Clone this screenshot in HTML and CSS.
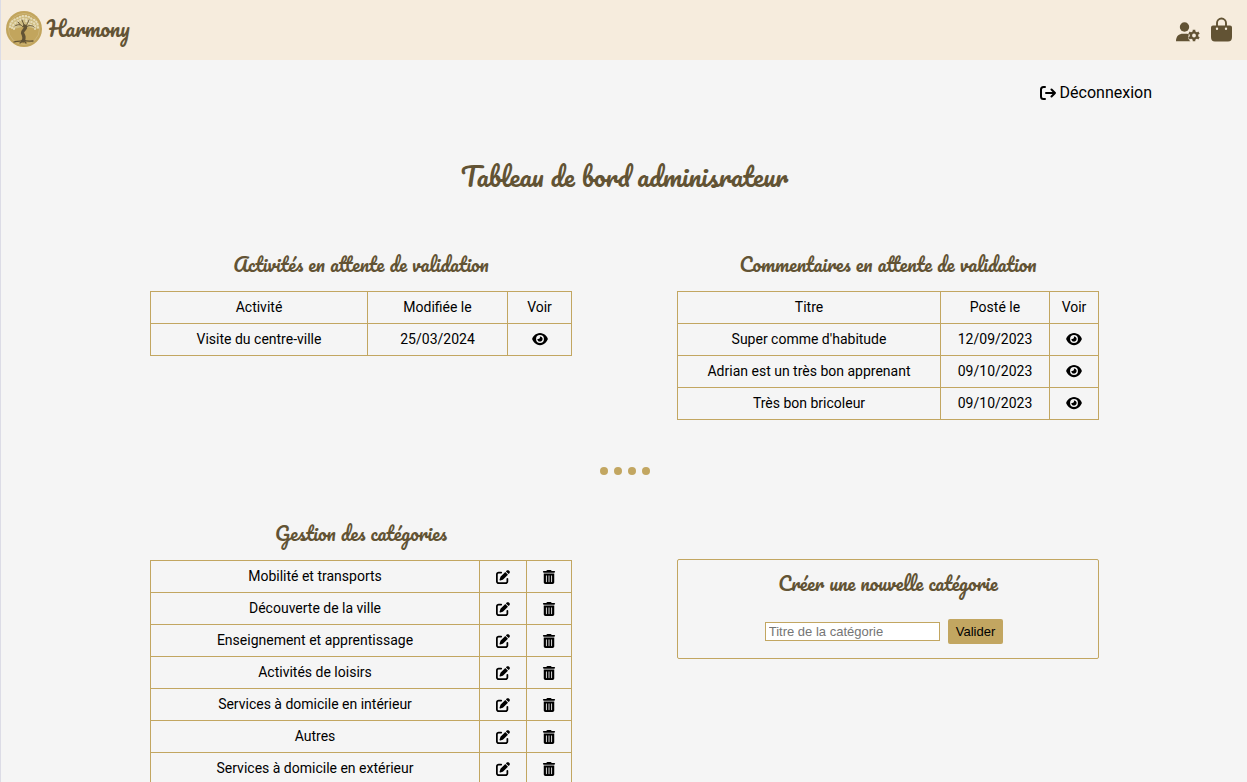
FILE: index.html
```html
<!DOCTYPE html>
<html lang="fr">
<head>
<meta charset="utf-8">
<meta name="viewport" content="width=device-width, initial-scale=1">
<title>Harmony</title>
<link rel="stylesheet" href="styles.css">
</head>
<body>
<svg class="sprite" aria-hidden="true">
  <symbol id="eye" viewBox="0 0 576 512"><path d="M288 32c-80.8 0-145.5 36.8-192.6 80.6C48.6 156 17.3 208 2.5 243.7c-3.3 7.9-3.3 16.7 0 24.6C17.3 304 48.6 356 95.4 399.4C142.5 443.2 207.2 480 288 480s145.5-36.8 192.6-80.6c46.8-43.5 78.1-95.4 93-131.1c3.3-7.9 3.3-16.7 0-24.6c-14.9-35.7-46.2-87.7-93-131.1C433.5 68.8 368.8 32 288 32zM144 256a144 144 0 1 1 288 0 144 144 0 1 1 -288 0zm144-64c0 35.3-28.7 64-64 64c-7.1 0-13.9-1.2-20.3-3.3c-5.5-1.8-11.9 1.6-11.7 7.4c.3 6.9 1.3 13.8 3.2 20.7c13.7 51.2 66.4 81.6 117.6 67.9s81.6-66.4 67.9-117.6c-11.1-41.5-47.8-69.4-88.6-71.1c-5.8-.2-9.2 6.1-7.4 11.7c2.1 6.4 3.3 13.2 3.3 20.3z"/></symbol>
  <symbol id="edit" viewBox="0 0 512 512"><path d="M471.6 21.7c-21.9-21.9-57.3-21.9-79.2 0L362.3 51.7l97.9 97.9 30.1-30.1c21.9-21.9 21.9-57.3 0-79.2L471.6 21.7zm-299.2 220c-6.1 6.1-10.8 13.6-13.5 21.9l-29.6 88.8c-2.9 8.6-.6 18.1 5.8 24.6s15.9 8.7 24.6 5.8l88.8-29.6c8.2-2.7 15.7-7.4 21.9-13.5L437.7 172.3 339.7 74.3 172.4 241.7zM96 64C43 64 0 107 0 160V416c0 53 43 96 96 96H352c53 0 96-43 96-96V320c0-17.7-14.3-32-32-32s-32 14.3-32 32v96c0 17.7-14.3 32-32 32H96c-17.7 0-32-14.3-32-32V160c0-17.7 14.3-32 32-32h96c17.7 0 32-14.3 32-32s-14.3-32-32-32H96z"/></symbol>
  <symbol id="trash" viewBox="0 0 448 512"><path fill-rule="evenodd" d="M135.2 17.7L128 32H32C14.3 32 0 46.3 0 64S14.3 96 32 96H416c17.7 0 32-14.3 32-32s-14.3-32-32-32H320l-7.2-14.3C307.4 6.8 296.3 0 284.2 0H163.8c-12.1 0-23.2 6.8-28.6 17.7zM416 128H32V448c0 35.3 28.7 64 64 64H352c35.3 0 64-28.7 64-64V128zM112 208a16 16 0 0 1 32 0V432a16 16 0 0 1-32 0zM208 208a16 16 0 0 1 32 0V432a16 16 0 0 1-32 0zM304 208a16 16 0 0 1 32 0V432a16 16 0 0 1-32 0z"/></symbol>
</svg>

<header class="topbar">
  <a class="brand" href="#">
    <svg class="brand-logo" viewBox="0 0 36 36" aria-hidden="true">
      <circle cx="18" cy="18" r="18" fill="#c2a55d"/>
      <circle cx="18" cy="18" r="15.5" fill="none" stroke="#cdb577" stroke-width="1"/>
      <path fill="#cfbd83" d="M3 16C3 11 6 8 10 8C13 4 22 3 26 8C30 8 33 12 33 17C29 19 25 16 20 16C15 15 10 20 3 16Z"/>
      <g fill="none" stroke="#e6dcb8" stroke-width="2" stroke-linecap="round" stroke-dasharray=".5 2.500">
        <path d="M4 16C4 11 8 8 12 7C16 4 22 4 26 8C30 9 32 12 32 17"/>
        <path d="M6 17C7 12 11 11 14 9C18 6 22 9 25 11C28 11 30 14 29 18"/>
        <path d="M8 18C9 14 12 13 14 13M20 10L25 14C27 14 28 16 27 18"/>
      </g>
      <g fill="none" stroke="#625334" stroke-linecap="round">
        <path stroke-width="1" d="M17 16C15 13 12 13 9 15M14 13.500L12 11M18 14L16 9M20 15C21 13 22 12 23 9M20 16C23 14 26 14 28 16"/>
        <path stroke-width="3.200" d="M18.500 15C22 17 16 19 16.500 22C18 25 19 27 17 30"/>
        <path stroke-width="1.300" d="M17 29C14 31 11 30 8 31M18 29C21 31 24 30 27 30M17 30L14 32M18 30L20 32"/>
      </g>
    </svg>
    <span>Harmony</span>
  </a>
  <nav class="top-actions" aria-label="Compte">
    <a href="#" aria-label="Administration">
      <svg class="icon-user" viewBox="0 0 24 20" aria-hidden="true">
        <circle cx="8.500" cy="5" r="4.700"/>
        <path d="M0 19.200C0 14 3 11.700 7 11.700H10C11.500 11.700 12.500 12 13 12.500C11.500 15 12.500 18 14.500 19.200H0Z"/>
        <circle cx="18" cy="13.500" r="3.100" fill="none" stroke="currentColor" stroke-width="2.400"/>
        <path fill="none" stroke="currentColor" stroke-width="2.600" d="M18 7.700V10M18 17V19.300M13 10.600L15 11.800M21 15.200L23 16.400M13 16.400L15 15.200M21 11.800L23 10.600"/>
      </svg>
    </a>
    <a href="#" aria-label="Panier">
      <svg class="icon-bag" viewBox="0 0 22 25" aria-hidden="true">
        <path fill-rule="evenodd" d="M2 8.500H19Q21 8.500 21 10.500V20Q21 24.500 17 24.500H4Q0 24.500 0 20V10.500Q0 8.500 2 8.500ZM6 10.500A1.200 1.200 0 1 0 6 12.900A1.200 1.200 0 0 0 6 10.500ZM15 10.500A1.200 1.200 0 1 0 15 12.900A1.200 1.200 0 0 0 15 10.500Z"/>
        <path fill="none" stroke="currentColor" stroke-width="1.900" d="M6 9V6A4.500 4.500 0 0 1 15 6V9"/>
      </svg>
    </a>
  </nav>
</header>

<main class="page">
  <div class="session">
    <a class="logout" href="#">
      <svg class="icon" viewBox="0 0 16 16" aria-hidden="true"><path fill="none" stroke="currentColor" stroke-width="2" stroke-linecap="round" stroke-linejoin="round" d="M5 2H3.500Q1 2 1 4.500V11.500Q1 14 3.500 14H5M6 8H15M11.500 4.500L15 8L11.500 11.500"/></svg>
      <span>Déconnexion</span>
    </a>
  </div>

  <h1>Tableau de bord adminisrateur</h1>

  <div class="columns">
    <section>
      <h2>Activités en attente de validation</h2>
      <table class="activities">
        <thead><tr><th>Activité</th><th class="date">Modifiée le</th><th class="view">Voir</th></tr></thead>
        <tbody>
          <tr><td>Visite du centre-ville</td><td>25/03/2024</td><td><a href="#" aria-label="Voir"><svg class="eye"><use href="#eye"/></svg></a></td></tr>
        </tbody>
      </table>
    </section>
    <section>
      <h2>Commentaires en attente de validation</h2>
      <table class="comments">
        <thead><tr><th>Titre</th><th class="date">Posté le</th><th class="view">Voir</th></tr></thead>
        <tbody>
          <tr><td>Super comme d'habitude</td><td>12/09/2023</td><td><a href="#" aria-label="Voir"><svg class="eye"><use href="#eye"/></svg></a></td></tr>
          <tr><td>Adrian est un très bon apprenant</td><td>09/10/2023</td><td><a href="#" aria-label="Voir"><svg class="eye"><use href="#eye"/></svg></a></td></tr>
          <tr><td>Très bon bricoleur</td><td>09/10/2023</td><td><a href="#" aria-label="Voir"><svg class="eye"><use href="#eye"/></svg></a></td></tr>
        </tbody>
      </table>
    </section>
  </div>

  <div class="dots" aria-hidden="true"><i></i><i></i><i></i><i></i></div>

  <div class="columns">
    <section>
      <h2>Gestion des catégories</h2>
      <table class="categories">
        <tbody>
          <tr><td>Mobilité et transports</td><td class="edit"><button type="button" aria-label="Modifier"><svg class="tool"><use href="#edit"/></svg></button></td><td class="delete"><button type="button" aria-label="Supprimer"><svg class="tool"><use href="#trash"/></svg></button></td></tr>
          <tr><td>Découverte de la ville</td><td><button type="button" aria-label="Modifier"><svg class="tool"><use href="#edit"/></svg></button></td><td><button type="button" aria-label="Supprimer"><svg class="tool"><use href="#trash"/></svg></button></td></tr>
          <tr><td>Enseignement et apprentissage</td><td><button type="button" aria-label="Modifier"><svg class="tool"><use href="#edit"/></svg></button></td><td><button type="button" aria-label="Supprimer"><svg class="tool"><use href="#trash"/></svg></button></td></tr>
          <tr><td>Activités de loisirs</td><td><button type="button" aria-label="Modifier"><svg class="tool"><use href="#edit"/></svg></button></td><td><button type="button" aria-label="Supprimer"><svg class="tool"><use href="#trash"/></svg></button></td></tr>
          <tr><td>Services à domicile en intérieur</td><td><button type="button" aria-label="Modifier"><svg class="tool"><use href="#edit"/></svg></button></td><td><button type="button" aria-label="Supprimer"><svg class="tool"><use href="#trash"/></svg></button></td></tr>
          <tr><td>Autres</td><td><button type="button" aria-label="Modifier"><svg class="tool"><use href="#edit"/></svg></button></td><td><button type="button" aria-label="Supprimer"><svg class="tool"><use href="#trash"/></svg></button></td></tr>
          <tr><td>Services à domicile en extérieur</td><td><button type="button" aria-label="Modifier"><svg class="tool"><use href="#edit"/></svg></button></td><td><button type="button" aria-label="Supprimer"><svg class="tool"><use href="#trash"/></svg></button></td></tr>
        </tbody>
      </table>
    </section>
    <section class="create">
      <h2>Créer une nouvelle catégorie</h2>
      <form class="create-form">
        <input type="text" aria-label="Titre de la catégorie" placeholder="Titre de la catégorie">
        <button type="submit">Valider</button>
      </form>
    </section>
  </div>
</main>
</body>
</html>
```

FILE: styles.css
```css
:root {
  --gold: #c2a661;
  --brown: #625334;
  --script: Pacifico, Lato, cursive;
}

* { box-sizing: border-box; }

body {
  margin: 0;
  border-left: 1px solid #dcdce6;
  background: #f5f5f5;
  color: #000;
  font-family: Roboto, sans-serif;
  font-size: 16px;
}

a { color: inherit; text-decoration: none; }
svg { display: block; fill: currentColor; }
.sprite { display: none; }

.topbar {
  display: flex;
  align-items: center;
  justify-content: space-between;
  height: 60px;
  padding: 0 14px 2px 5px;
  background: #f6ecdd;
  color: var(--brown);
}

.brand {
  display: flex;
  align-items: center;
  gap: 5px;
  font: 400 21px/32px var(--script);
}

.brand-logo { width: 36px; height: 36px; }

.top-actions { display: flex; align-items: flex-end; gap: 11px; }
.icon-user { width: 24px; height: 20px; }
.icon-bag { width: 22px; height: 25px; }

.page { padding: 22px 148px 0 149px; }

.session { display: flex; justify-content: flex-end; margin-right: -53px; }
.logout { display: flex; align-items: center; gap: 4px; line-height: 21px; }
.icon { width: 16px; height: 16px; }

h1, h2 {
  margin: 0;
  color: var(--brown);
  font-family: var(--script);
  font-weight: 400;
  text-align: center;
}

h1 { margin: 51px 0 50px; font-size: 26px; line-height: 44px; }
h2 { font-size: 19px; line-height: 32px; }

.columns {
  display: grid;
  grid-template-columns: 1fr 1fr;
  align-items: start;
  gap: 105px;
}

table {
  width: 100%;
  margin-top: 11px;
  border-collapse: collapse;
  table-layout: fixed;
  font-size: 14px;
}

th, td {
  height: 32px;
  padding: 0 0 2px;
  border: 1px solid var(--gold);
  font-weight: 400;
  text-align: center;
}

.activities .date { width: 140px; }
.activities .view { width: 64px; }
.comments .date { width: 109px; }
.comments .view { width: 49px; }
.edit { width: 47px; }
.delete { width: 45px; }

.eye { width: 16px; height: 14px; margin: auto; }
.tool { width: 14px; height: 14px; }

td button {
  padding: 0;
  border: 0;
  background: none;
  color: inherit;
  vertical-align: middle;
}

.dots {
  display: flex;
  justify-content: center;
  gap: 6px;
  margin: 47px 0 42px;
}

.dots i { width: 8px; height: 8px; border-radius: 50%; background: var(--gold); }

.create {
  margin-top: 42px;
  padding: 7px 12px 14px;
  border: 1px solid var(--gold);
  border-radius: 2px;
}

.create-form {
  display: flex;
  align-items: center;
  justify-content: center;
  gap: 8px;
  margin: 20px 8px 0 0;
}

.create-form input {
  width: 175px;
  height: 19px;
  padding: 0 3px;
  border: 1px solid var(--gold);
  background: #fff;
  font: 13px "Liberation Sans", Arial, sans-serif;
}

.create-form input::placeholder { color: #757575; }

.create-form button {
  height: 25px;
  padding: 0 8px;
  border: 0;
  border-radius: 2px;
  background: var(--gold);
  color: #000;
  font: 13px "Liberation Sans", Arial, sans-serif;
}
```
